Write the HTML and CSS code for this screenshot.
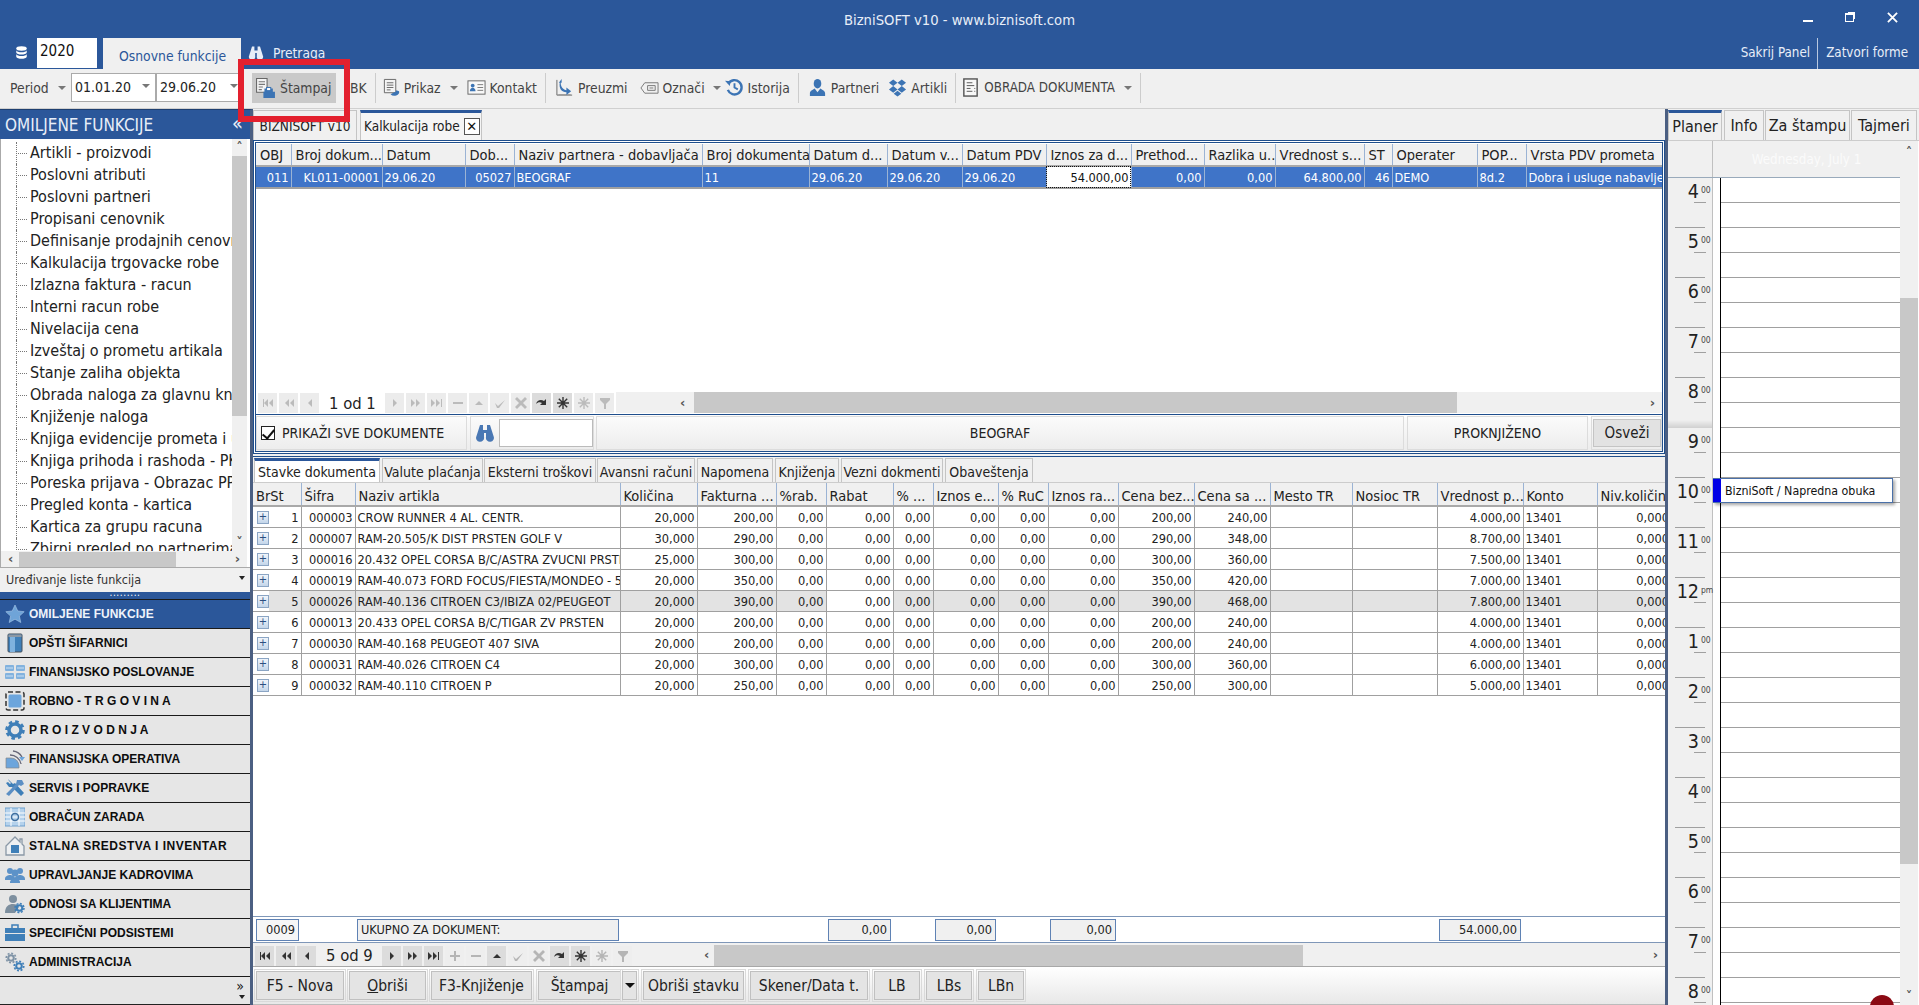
FILE: index.html
```html
<!DOCTYPE html>
<html lang="sr">
<head>
<meta charset="utf-8">
<title>BizniSOFT v10</title>
<link rel="stylesheet" href="styles.css">
</head>
<body>
<svg class="defs" width="0" height="0" aria-hidden="true">
  <defs>
    <symbol id="i-db" viewBox="0 0 20 20"><ellipse cx="10" cy="4.500" rx="7" ry="3" fill="#fff"/><path d="M3 7c1 3.600 13 3.600 14 0v3c-1 3.600-13 3.600-14 0z" fill="#fff"/><path d="M3 12c1 3.600 13 3.600 14 0v3.500c-1 3.600-13 3.600-14 0z" fill="#fff"/></symbol>
    <symbol id="i-bino" viewBox="0 0 20 20"><path d="M5 2h3v5h4V2h3l3.500 11a4 4 0 1 1-7.500 1v-4H9v4a4 4 0 1 1-7.500-1z" fill="currentColor"/></symbol>
    <symbol id="i-print" viewBox="0 0 20 20"><path d="M1.500 1.500h10v13h-10z" fill="#f4f4f4" stroke="#666"/><path d="M3.500 4.500h6M3.500 7h6M3.500 9.500h4M3.500 12h3" stroke="#777"/><path d="M9 11h8v3h2v6H8v-6h1z" fill="#3c74b4"/><rect x="11" y="10" width="4" height="3" fill="#fff" stroke="#3c74b4"/></symbol>
    <symbol id="i-view" viewBox="0 0 20 20"><path d="M2.500 1.500h12v14h-12z" fill="#f4f4f4" stroke="#666"/><path d="M5 5h7M5 7.500h7M5 10h7M5 12.500h4" stroke="#666"/><path d="M9 17a5 4 0 0 0 9-3l-3-1a2 2 0 0 1-2 2z" fill="#3c74b4"/></symbol>
    <symbol id="i-card" viewBox="0 0 20 20"><rect x="1" y="3" width="18" height="14" fill="#f8f8f8" stroke="#666"/><circle cx="6" cy="8" r="2" fill="#3c74b4"/><path d="M3 14c0-5 6-5 6 0z" fill="#3c74b4"/><path d="M11 7h6M11 10h6M11 13h6" stroke="#777"/></symbol>
    <symbol id="i-fetch" viewBox="0 0 20 20"><path d="M2 2v16h16" fill="none" stroke="#666"/><path d="M3.500 17.500h13" stroke="#999"/><path d="M7 1l-3 4h2c0 5 3 7 6 8v-3l5 4-5 4v-3c-5 0-8-4-7-10h2z" fill="#3c74b4"/></symbol>
    <symbol id="i-mark" viewBox="0 0 20 20"><path d="M5 5h14v11H5L1 10.500z" fill="#f0f0f0" stroke="#777"/><path d="M8 8h8v5H8z" fill="none" stroke="#777"/><path d="M10 10.500h4" stroke="#777"/></symbol>
    <symbol id="i-hist" viewBox="0 0 20 20"><path d="M3.500 6a7.500 7.500 0 1 1-.5 6.500" fill="none" stroke="#3c74b4" stroke-width="2.500"/><path d="M0 3l6 .5-1 5z" fill="#3c74b4"/><path d="M10 5.500V10l3.500 2" fill="none" stroke="#3c74b4" stroke-width="2"/></symbol>
    <symbol id="i-user" viewBox="0 0 20 20"><ellipse cx="10" cy="6" rx="4" ry="5" fill="#3c74b4"/><path d="M2 19v-3c0-3 4-4 5-5l3 4 3-4c1 1 5 2 5 5v3z" fill="#3c74b4"/></symbol>
    <symbol id="i-box" viewBox="0 0 20 20"><path d="M5.500 1.500L10 5 5.500 8.500 1 5zM14.500 1.500L19 5l-4.500 3.500L10 5zM5.500 8.500L10 12l-4.500 3.500L1 12zM14.500 8.500L19 12l-4.500 3.500L10 12zM6 16.500l4-3 4 3-4 3z" fill="#3c74b4"/></symbol>
    <symbol id="i-doc" viewBox="0 0 20 20"><rect x="3" y="1" width="14" height="18" fill="#f8f8f8" stroke="#555" stroke-width="1.500"/><path d="M6 5h6M6 8h8M6 11h4M6 14h6M14 11h1M14 14h1" stroke="#555"/></symbol>

    <symbol id="n-star" viewBox="0 0 20 20"><path d="M10 1l2.800 6 6.400.7-4.800 4.400 1.400 6.400L10 15.200 4.200 18.500l1.400-6.400L.8 7.700 7.200 7z" fill="#6fa4d8" stroke="#a9c9ea" stroke-width=".6"/></symbol>
    <symbol id="n-book" viewBox="0 0 20 20"><rect x="3" y="1" width="14" height="18" rx="1" fill="#3f7fb8" stroke="#44505c"/><rect x="3.500" y="1.500" width="13" height="2.500" fill="#8c98a4"/><rect x="5" y="4" width="5" height="15" fill="#7fb2de"/></symbol>
    <symbol id="n-tiles" viewBox="0 0 20 20"><g fill="#82b2de"><rect x="0" y="3" width="9" height="6" rx="1"/><rect x="11" y="3" width="9" height="6" rx="1"/><rect x="0" y="11" width="9" height="6" rx="1"/><rect x="11" y="11" width="9" height="6" rx="1"/></g><path d="M1 6h7M12 6h7M1 14h7M12 14h7" stroke="#cfe2f4"/></symbol>
    <symbol id="n-square" viewBox="0 0 20 20"><rect x="1" y="1" width="18" height="18" rx="2" fill="none" stroke="#333" stroke-width="1.500" stroke-dasharray="5 2.500"/><rect x="3.500" y="3.500" width="13" height="13" rx="1.500" fill="#6ca5dc"/></symbol>
    <symbol id="n-gear" viewBox="0 0 20 20"><circle cx="10" cy="10" r="6" fill="none" stroke="#3f7fb8" stroke-width="3.500"/><circle cx="10" cy="10" r="8.300" fill="none" stroke="#3f7fb8" stroke-width="3" stroke-dasharray="3.500 3"/></symbol>
    <symbol id="n-feed" viewBox="0 0 20 20"><path d="M1 9h5a8 8 0 0 1 8 8v2H1z" fill="#6ca5dc" stroke="#888" stroke-width=".7"/><path d="M5 6a11 11 0 0 1 11 9M8 2a12 12 0 0 1 9 6" fill="none" stroke="#667" stroke-width="1.300"/><path d="M14 8h6l-3 4z" fill="#6ca5dc"/></symbol>
    <symbol id="n-tools" viewBox="0 0 20 20"><path d="M3 1l5 5 2-1 9 10-3 3-9-9-3 0-3-4 2-1 2 2 1-1-2-2z" fill="#3f7fb8"/><path d="M12 2h5l2 4-3 2-2-1-10 11-3-2L11 6z" fill="#5c8fc4"/></symbol>
    <symbol id="n-pay" viewBox="0 0 20 20"><rect x="0" y="1" width="20" height="18" fill="#b5d2ec" stroke="#6d9fce"/><path d="M0 6h20M0 10h20M0 14h20M6 1v18M14 1v18" stroke="#fff"/><circle cx="10" cy="10" r="3.500" fill="none" stroke="#3f6f9f" stroke-width="1.500"/></symbol>
    <symbol id="n-house" viewBox="0 0 20 20"><path d="M10 1L1 10v9h18v-9l-2-2V3h-2v3z" fill="#eef0f2" stroke="#8a98a6" stroke-width="1.300"/><rect x="6" y="9" width="8" height="8" fill="#3f7fb8"/></symbol>
    <symbol id="n-people" viewBox="0 0 20 20"><g fill="#5c92c8"><circle cx="5" cy="6" r="3"/><circle cx="15" cy="6" r="3"/><circle cx="10" cy="8" r="3.500"/><path d="M0 14c0-3 3-4 5-4s5 1 5 3c0-2 3-3 5-3s5 1 5 4v1H14c1 1 1 2 1 3H5c0-1 0-2 1-3H0z"/></g></symbol>
    <symbol id="n-crm" viewBox="0 0 20 20"><g fill="#7d8f9f"><circle cx="8" cy="5" r="4"/><path d="M0 19c0-7 4-9 8-9 3 0 5 1 6 3l-4 6z"/></g><circle cx="14.500" cy="14" r="2.800" fill="none" stroke="#3f7fb8" stroke-width="2"/><circle cx="14.500" cy="14" r="4.500" fill="none" stroke="#3f7fb8" stroke-width="1.500" stroke-dasharray="2 1.500"/></symbol>
    <symbol id="n-case" viewBox="0 0 20 20"><path d="M7 5V2h6v3" fill="none" stroke="#3f7fb8" stroke-width="1.500"/><rect x="0" y="5" width="20" height="5" fill="#3f7fb8"/><rect x="0" y="11" width="20" height="7" fill="#3f7fb8"/></symbol>
    <symbol id="n-gears" viewBox="0 0 20 20"><circle cx="6" cy="6" r="2.800" fill="none" stroke="#7f93a6" stroke-width="2"/><circle cx="6" cy="6" r="4.800" fill="none" stroke="#7f93a6" stroke-width="1.600" stroke-dasharray="2 1.700"/><circle cx="14" cy="14" r="2.800" fill="none" stroke="#3f7fb8" stroke-width="2"/><circle cx="14" cy="14" r="4.800" fill="none" stroke="#3f7fb8" stroke-width="1.600" stroke-dasharray="2 1.700"/></symbol>

    <symbol id="g-first" viewBox="0 0 14 14"><path d="M2 3v8h1V3zM7 3v8L3 7zM12 3v8L8 7z"/></symbol>
    <symbol id="g-prev2" viewBox="0 0 14 14"><path d="M7 3v8L3 7zM12 3v8L8 7z"/></symbol>
    <symbol id="g-prev" viewBox="0 0 14 14"><path d="M9 3v8L5 7z"/></symbol>
    <symbol id="g-next" viewBox="0 0 14 14"><path d="M5 3v8l4-4z"/></symbol>
    <symbol id="g-next2" viewBox="0 0 14 14"><path d="M2 3v8l4-4zM7 3v8l4-4z"/></symbol>
    <symbol id="g-last" viewBox="0 0 14 14"><path d="M1 3v8l4-4zM6 3v8l4-4zM11 3v8h1V3z"/></symbol>
    <symbol id="g-plus" viewBox="0 0 14 14"><path d="M6 2h2v4h4v2H8v4H6V8H2V6h4z"/></symbol>
    <symbol id="g-minus" viewBox="0 0 14 14"><path d="M2 6h10v2H2z"/></symbol>
    <symbol id="g-up" viewBox="0 0 14 14"><path d="M3 9l4-4 4 4z"/></symbol>
    <symbol id="g-check" viewBox="0 0 14 14"><path d="M2 7l3 3 7-6-6 8h-2z"/></symbol>
    <symbol id="g-x" viewBox="0 0 14 14"><path d="M1 3l2-2 4 4 4-4 2 2-4 4 4 4-2 2-4-4-4 4-2-2 4-4z"/></symbol>
    <symbol id="g-redo" viewBox="0 0 14 14"><path d="M1 8c1-4 5-5 8-3l2-2v6H5l2-2c-2-1-4-1-6 1z"/></symbol>
    <symbol id="g-ast" viewBox="0 0 14 14"><path d="M7 1v12M1 7h12M2.800 2.800l8.400 8.400M11.200 2.800l-8.400 8.400" stroke="currentColor" stroke-width="1.400"/></symbol>
    <symbol id="g-filter" viewBox="0 0 14 14"><path d="M2 2h10v2L8 8v5H6V8L2 4z"/></symbol>
  </defs>
</svg>

<div class="app">
  <header class="titlebar">
    <div class="title-row">
      <span></span>
      <h1 class="app-title">BizniSOFT v10 - www.biznisoft.com</h1>
      <div class="win-controls">
        <span class="win-min"></span>
        <span class="win-max"></span>
        <svg class="win-close" viewBox="0 0 12 12"><path d="M1 1l10 10M11 1L1 11" stroke="#fff" stroke-width="2"/></svg>
      </div>
    </div>
    <div class="ribbon-row">
      <svg class="db-icon"><use href="#i-db"/></svg>
      <div class="year">2020</div>
      <div class="ribbon-tab">Osnovne funkcije</div>
      <div class="ribbon-link"><svg class="bino"><use href="#i-bino"/></svg>Pretraga</div>
      <div class="ribbon-right"><span>Sakrij Panel</span><span class="ribbon-sep">Zatvori forme</span></div>
    </div>
  </header>

  <div class="toolbar">
    <span class="period">Period</span><i class="caret period-caret"></i>
    <div class="date">01.01.20<i class="caret"></i></div>
    <div class="date date2">29.06.20<i class="caret"></i></div>
    <div class="tool tool-active"><svg class="ti"><use href="#i-print"/></svg>Štampaj</div>
    <div class="tool tool-bk">BK</div>
    <div class="vsep"></div>
    <div class="tool tool-prikaz"><svg class="ti"><use href="#i-view"/></svg>Prikaz<i class="caret"></i></div>
    <div class="tool tool-kontakt"><svg class="ti"><use href="#i-card"/></svg>Kontakt</div>
    <div class="vsep"></div>
    <div class="tool tool-preuzmi"><svg class="ti"><use href="#i-fetch"/></svg>Preuzmi</div>
    <div class="tool tool-oznaci"><svg class="ti"><use href="#i-mark"/></svg>Označi<i class="caret"></i></div>
    <div class="tool tool-istorija"><svg class="ti"><use href="#i-hist"/></svg>Istorija</div>
    <div class="vsep"></div>
    <div class="tool tool-partneri"><svg class="ti"><use href="#i-user"/></svg>Partneri</div>
    <div class="tool tool-artikli"><svg class="ti"><use href="#i-box"/></svg>Artikli</div>
    <div class="vsep"></div>
    <div class="tool tool-obrada"><svg class="ti"><use href="#i-doc"/></svg>OBRADA DOKUMENTA<i class="caret"></i></div>
    <div class="vsep"></div>
  </div>

  <div class="main">
    <aside class="sidebar">
      <div class="side-head"><span>OMILJENE FUNKCIJE</span><span class="side-collapse">«</span></div>
      <div class="tree-box">
        <div class="tree-row">
          <ul class="tree">
            <li>Artikli - proizvodi</li>
            <li>Poslovni atributi</li>
            <li>Poslovni partneri</li>
            <li>Propisani cenovnik</li>
            <li>Definisanje prodajnih cenovnika</li>
            <li>Kalkulacija trgovacke robe</li>
            <li>Izlazna faktura - racun</li>
            <li>Interni racun robe</li>
            <li>Nivelacija cena</li>
            <li>Izveštaj o prometu artikala</li>
            <li>Stanje zaliha objekta</li>
            <li>Obrada naloga za glavnu knjigu</li>
            <li>Knjiženje naloga</li>
            <li>Knjiga evidencije prometa i usluga</li>
            <li>Knjiga prihoda i rashoda - PK1</li>
            <li>Poreska prijava - Obrazac PPDV</li>
            <li>Pregled konta - kartica</li>
            <li>Kartica za grupu racuna</li>
            <li>Zbirni pregled po partnerima</li>
          </ul>
          <div class="tree-vscroll"><span class="chev">˄</span><div class="tree-vthumb"></div><span class="chev chev-end">˅</span></div>
        </div>
        <div class="tree-hscroll"><span class="chev">‹</span><div class="tree-hthumb"></div><span class="chev chev-right">›</span></div>
      </div>
      <div class="edit-list">Uređivanje liste funkcija<i class="caret-dark"></i></div>
      <div class="grip">.........</div>
      <nav class="side-nav">
        <a class="nav-item nav-active"><svg class="ni"><use href="#n-star"/></svg>OMILJENE FUNKCIJE</a>
        <a class="nav-item"><svg class="ni"><use href="#n-book"/></svg>OPŠTI ŠIFARNICI</a>
        <a class="nav-item"><svg class="ni"><use href="#n-tiles"/></svg>FINANSIJSKO POSLOVANJE</a>
        <a class="nav-item"><svg class="ni"><use href="#n-square"/></svg>ROBNO - T R G O V I N A</a>
        <a class="nav-item"><svg class="ni"><use href="#n-gear"/></svg>P R O I Z V O D N J A</a>
        <a class="nav-item"><svg class="ni"><use href="#n-feed"/></svg>FINANSIJSKA OPERATIVA</a>
        <a class="nav-item"><svg class="ni"><use href="#n-tools"/></svg>SERVIS I POPRAVKE</a>
        <a class="nav-item"><svg class="ni"><use href="#n-pay"/></svg>OBRAČUN ZARADA</a>
        <a class="nav-item nav-wide"><svg class="ni"><use href="#n-house"/></svg>STALNA SREDSTVA I INVENTAR</a>
        <a class="nav-item"><svg class="ni"><use href="#n-people"/></svg>UPRAVLJANJE KADROVIMA</a>
        <a class="nav-item"><svg class="ni"><use href="#n-crm"/></svg>ODNOSI SA KLIJENTIMA</a>
        <a class="nav-item"><svg class="ni"><use href="#n-case"/></svg>SPECIFIČNI PODSISTEMI</a>
        <a class="nav-item"><svg class="ni"><use href="#n-gears"/></svg>ADMINISTRACIJA</a>
      </nav>
      <div class="side-foot"><span>»<i class="caret-dark"></i></span></div>
    </aside>

    <section class="work">
      <div class="tabs doc-tabs">
        <div class="tab tab-plain">BIZNISOFT v10</div>
        <div class="tab tab-on">Kalkulacija robe<span class="tab-x">✕</span></div>
      </div>

      <div class="doc-panel">
        <div class="grid-clip docs-body">
          <table class="grid docs">
            <colgroup><col><col><col><col><col><col><col><col><col><col><col><col><col><col><col><col><col></colgroup>
            <thead><tr><th>OBJ</th><th>Broj dokum...</th><th>Datum</th><th>Dob...</th><th>Naziv partnera - dobavljača</th><th>Broj dokumenta</th><th>Datum d...</th><th>Datum v...</th><th>Datum PDV</th><th>Iznos za d...</th><th>Prethod...</th><th>Razlika u...</th><th>Vrednost s...</th><th>ST</th><th>Operater</th><th>POP...</th><th>Vrsta PDV prometa</th></tr></thead>
            <tbody><tr class="sel"><td class="r">011</td><td class="r">KL011-00001</td><td>29.06.20</td><td class="r">05027</td><td>BEOGRAF</td><td>11</td><td>29.06.20</td><td>29.06.20</td><td>29.06.20</td><td class="r focus">54.000,00</td><td class="r">0,00</td><td class="r">0,00</td><td class="r">64.800,00</td><td class="r">46</td><td>DEMO</td><td>8d.2</td><td>Dobra i usluge nabavljene</td></tr></tbody>
          </table>
        </div>
        <div class="gridnav">
          <div class="pager pager-dim">
            <b><svg><use href="#g-first"/></svg></b><b><svg><use href="#g-prev2"/></svg></b><b><svg><use href="#g-prev"/></svg></b>
            <span class="pos">1 od 1</span>
            <b><svg><use href="#g-next"/></svg></b><b><svg><use href="#g-next2"/></svg></b><b><svg><use href="#g-last"/></svg></b><b><svg><use href="#g-minus"/></svg></b><b><svg><use href="#g-up"/></svg></b><b><svg><use href="#g-check"/></svg></b><b><svg><use href="#g-x"/></svg></b>
            <b class="on"><svg><use href="#g-redo"/></svg></b><b class="on"><svg><use href="#g-ast"/></svg></b><b><svg><use href="#g-ast"/></svg></b><b><svg><use href="#g-filter"/></svg></b>
          </div>
          <div class="hscroll hscroll-top"><span class="chev">‹</span><div class="hthumb"></div><span class="chev chev-right">›</span></div>
        </div>
        <div class="filter">
          <label class="f-cell f-check"><span class="checkbox"></span>PRIKAŽI SVE DOKUMENTE</label>
          <div class="f-cell f-search"><svg class="f-bino"><use href="#i-bino"/></svg><span class="f-input"></span></div>
          <div class="f-cell f-partner">BEOGRAF</div>
          <div class="f-cell f-status">PROKNJIŽENO</div>
          <div class="f-refresh"><span>Osveži</span></div>
        </div>
      </div>

      <div class="split-line"></div>

      <div class="tabs item-tabs">
        <div class="tab tab-on">Stavke dokumenta</div>
        <div class="tab">Valute plaćanja</div>
        <div class="tab">Eksterni troškovi</div>
        <div class="tab">Avansni računi</div>
        <div class="tab">Napomena</div>
        <div class="tab">Knjiženja</div>
        <div class="tab">Vezni dokmenti</div>
        <div class="tab">Obaveštenja</div>
      </div>

      <div class="grid-clip items-body">
        <table class="grid items">
          <colgroup><col><col><col><col><col><col><col><col><col><col><col><col><col><col><col><col><col><col></colgroup>
          <thead><tr><th>BrSt</th><th>Šifra</th><th>Naziv artikla</th><th>Količina</th><th>Fakturna ...</th><th>%rab.</th><th>Rabat</th><th>% ...</th><th>Iznos e...</th><th>% RuC</th><th>Iznos ra...</th><th>Cena bez...</th><th>Cena sa ...</th><th>Mesto TR</th><th>Nosioc TR</th><th>Vrednost p...</th><th>Konto</th><th>Niv.količina</th></tr></thead>
          <tbody>
            <tr><td class="no"><span class="plus">+</span>1</td><td class="r">000003</td><td>CROW RUNNER 4 AL. CENTR.</td><td class="r">20,000</td><td class="r">200,00</td><td class="r">0,00</td><td class="r">0,00</td><td class="r">0,00</td><td class="r">0,00</td><td class="r">0,00</td><td class="r">0,00</td><td class="r">200,00</td><td class="r">240,00</td><td></td><td></td><td class="r">4.000,00</td><td>13401</td><td class="r">0,000</td></tr>
            <tr><td class="no"><span class="plus">+</span>2</td><td class="r">000007</td><td>RAM-20.505/K DIST PRSTEN GOLF V</td><td class="r">30,000</td><td class="r">290,00</td><td class="r">0,00</td><td class="r">0,00</td><td class="r">0,00</td><td class="r">0,00</td><td class="r">0,00</td><td class="r">0,00</td><td class="r">290,00</td><td class="r">348,00</td><td></td><td></td><td class="r">8.700,00</td><td>13401</td><td class="r">0,000</td></tr>
            <tr><td class="no"><span class="plus">+</span>3</td><td class="r">000016</td><td>20.432 OPEL CORSA B/C/ASTRA ZVUCNI PRSTEN</td><td class="r">25,000</td><td class="r">300,00</td><td class="r">0,00</td><td class="r">0,00</td><td class="r">0,00</td><td class="r">0,00</td><td class="r">0,00</td><td class="r">0,00</td><td class="r">300,00</td><td class="r">360,00</td><td></td><td></td><td class="r">7.500,00</td><td>13401</td><td class="r">0,000</td></tr>
            <tr><td class="no"><span class="plus">+</span>4</td><td class="r">000019</td><td>RAM-40.073 FORD FOCUS/FIESTA/MONDEO - 5</td><td class="r">20,000</td><td class="r">350,00</td><td class="r">0,00</td><td class="r">0,00</td><td class="r">0,00</td><td class="r">0,00</td><td class="r">0,00</td><td class="r">0,00</td><td class="r">350,00</td><td class="r">420,00</td><td></td><td></td><td class="r">7.000,00</td><td>13401</td><td class="r">0,000</td></tr>
            <tr class="cur"><td class="no"><span class="plus">+</span>5</td><td class="r">000026</td><td>RAM-40.136 CITROEN C3/IBIZA 02/PEUGEOT</td><td class="r">20,000</td><td class="r">390,00</td><td class="r">0,00</td><td class="r edit">0,00</td><td class="r">0,00</td><td class="r">0,00</td><td class="r">0,00</td><td class="r">0,00</td><td class="r">390,00</td><td class="r">468,00</td><td></td><td></td><td class="r">7.800,00</td><td>13401</td><td class="r">0,000</td></tr>
            <tr><td class="no"><span class="plus">+</span>6</td><td class="r">000013</td><td>20.433 OPEL CORSA B/C/TIGAR ZV PRSTEN</td><td class="r">20,000</td><td class="r">200,00</td><td class="r">0,00</td><td class="r">0,00</td><td class="r">0,00</td><td class="r">0,00</td><td class="r">0,00</td><td class="r">0,00</td><td class="r">200,00</td><td class="r">240,00</td><td></td><td></td><td class="r">4.000,00</td><td>13401</td><td class="r">0,000</td></tr>
            <tr><td class="no"><span class="plus">+</span>7</td><td class="r">000030</td><td>RAM-40.168 PEUGEOT 407 SIVA</td><td class="r">20,000</td><td class="r">200,00</td><td class="r">0,00</td><td class="r">0,00</td><td class="r">0,00</td><td class="r">0,00</td><td class="r">0,00</td><td class="r">0,00</td><td class="r">200,00</td><td class="r">240,00</td><td></td><td></td><td class="r">4.000,00</td><td>13401</td><td class="r">0,000</td></tr>
            <tr><td class="no"><span class="plus">+</span>8</td><td class="r">000031</td><td>RAM-40.026 CITROEN C4</td><td class="r">20,000</td><td class="r">300,00</td><td class="r">0,00</td><td class="r">0,00</td><td class="r">0,00</td><td class="r">0,00</td><td class="r">0,00</td><td class="r">0,00</td><td class="r">300,00</td><td class="r">360,00</td><td></td><td></td><td class="r">6.000,00</td><td>13401</td><td class="r">0,000</td></tr>
            <tr><td class="no"><span class="plus">+</span>9</td><td class="r">000032</td><td>RAM-40.110 CITROEN P</td><td class="r">20,000</td><td class="r">250,00</td><td class="r">0,00</td><td class="r">0,00</td><td class="r">0,00</td><td class="r">0,00</td><td class="r">0,00</td><td class="r">0,00</td><td class="r">250,00</td><td class="r">300,00</td><td></td><td></td><td class="r">5.000,00</td><td>13401</td><td class="r">0,000</td></tr>
          </tbody>
        </table>
      </div>

      <div class="totals">
        <div class="tot tot-count">0009</div>
        <div class="tot tot-label">UKUPNO ZA DOKUMENT:</div>
        <div class="tot tot-a">0,00</div>
        <div class="tot tot-b">0,00</div>
        <div class="tot tot-c">0,00</div>
        <div class="tot tot-d">54.000,00</div>
      </div>

      <div class="gridnav gridnav-low">
        <div class="pager">
          <b><svg><use href="#g-first"/></svg></b><b><svg><use href="#g-prev2"/></svg></b><b><svg><use href="#g-prev"/></svg></b>
          <span class="pos">5 od 9</span>
          <b><svg><use href="#g-next"/></svg></b><b><svg><use href="#g-next2"/></svg></b><b><svg><use href="#g-last"/></svg></b><b class="off"><svg><use href="#g-plus"/></svg></b><b class="off"><svg><use href="#g-minus"/></svg></b><b><svg><use href="#g-up"/></svg></b><b class="off"><svg><use href="#g-check"/></svg></b><b class="off"><svg><use href="#g-x"/></svg></b>
          <b><svg><use href="#g-redo"/></svg></b><b><svg><use href="#g-ast"/></svg></b><b class="off"><svg><use href="#g-ast"/></svg></b><b class="off"><svg><use href="#g-filter"/></svg></b>
        </div>
        <div class="hscroll hscroll-low"><span class="chev">‹</span><div class="hthumb"></div><span class="chev chev-right">›</span></div>
      </div>

      <div class="actions">
        <button class="btn btn-nova">F5 - Nova</button>
        <button class="btn btn-obrisi"><u>O</u>briši</button>
        <button class="btn btn-knj">F3-Knjiženje</button>
        <button class="btn btn-stampaj">Š<u>t</u>ampaj</button>
        <button class="btn btn-drop"><i class="caret-black"></i></button>
        <button class="btn btn-stavku">Obriši <u>s</u>tavku</button>
        <button class="btn btn-skener">Skener/Data t.</button>
        <button class="btn btn-lb">LB</button>
        <button class="btn btn-lb">LBs</button>
        <button class="btn btn-lb">LBn</button>
      </div>
    </section>

    <aside class="planner">
      <div class="tabs plan-tabs">
        <div class="tab tab-on">Planer</div>
        <div class="tab">Info</div>
        <div class="tab">Za štampu</div>
        <div class="tab">Tajmeri</div>
      </div>
      <div class="sched">
        <div class="sched-main">
          <div class="sched-head"><div class="sched-corner"></div><div class="sched-day">Wednesday, July 1</div></div>
          <div class="sched-body">
            <div class="hour"><div class="h-time"><span class="h-num">4</span><span class="h-min">00</span></div><div class="h-day"><i></i><i></i></div></div>
            <div class="hour"><div class="h-time"><span class="h-num">5</span><span class="h-min">00</span></div><div class="h-day"><i></i><i></i></div></div>
            <div class="hour"><div class="h-time"><span class="h-num">6</span><span class="h-min">00</span></div><div class="h-day"><i></i><i></i></div></div>
            <div class="hour"><div class="h-time"><span class="h-num">7</span><span class="h-min">00</span></div><div class="h-day"><i></i><i></i></div></div>
            <div class="hour"><div class="h-time h-shadow"><span class="h-num">8</span><span class="h-min">00</span></div><div class="h-day"><i></i><i></i></div></div>
            <div class="hour"><div class="h-time"><span class="h-num">9</span><span class="h-min">00</span></div><div class="h-day"><i></i><i></i></div></div>
            <div class="hour"><div class="h-time"><span class="h-num">10</span><span class="h-min">00</span></div><div class="h-day"><i></i><i></i></div></div>
            <div class="hour"><div class="h-time"><span class="h-num">11</span><span class="h-min">00</span></div><div class="h-day"><i></i><i></i></div></div>
            <div class="hour"><div class="h-time"><span class="h-num">12</span><span class="h-min">pm</span></div><div class="h-day"><i></i><i></i></div></div>
            <div class="hour"><div class="h-time"><span class="h-num">1</span><span class="h-min">00</span></div><div class="h-day"><i></i><i></i></div></div>
            <div class="hour"><div class="h-time"><span class="h-num">2</span><span class="h-min">00</span></div><div class="h-day"><i></i><i></i></div></div>
            <div class="hour"><div class="h-time"><span class="h-num">3</span><span class="h-min">00</span></div><div class="h-day"><i></i><i></i></div></div>
            <div class="hour"><div class="h-time"><span class="h-num">4</span><span class="h-min">00</span></div><div class="h-day"><i></i><i></i></div></div>
            <div class="hour"><div class="h-time"><span class="h-num">5</span><span class="h-min">00</span></div><div class="h-day"><i></i><i></i></div></div>
            <div class="hour"><div class="h-time"><span class="h-num">6</span><span class="h-min">00</span></div><div class="h-day"><i></i><i></i></div></div>
            <div class="hour"><div class="h-time"><span class="h-num">7</span><span class="h-min">00</span></div><div class="h-day"><i></i><i></i></div></div>
            <div class="hour"><div class="h-time"><span class="h-num">8</span><span class="h-min">00</span></div><div class="h-day"><i></i><i></i></div></div>
            <div class="event"><span class="event-bar"></span><span class="event-text">BizniSoft / Napredna obuka</span></div>
            <div class="badge"></div>
          </div>
        </div>
        <div class="sched-scroll"><span class="chev">˄</span><div class="sched-thumb"></div><span class="chev chev-end">˅</span></div>
      </div>
    </aside>
  </div>

  <div class="callout"></div>
</div>
</body>
</html>
```

FILE: styles.css
```css
* { box-sizing: border-box; }
html, body { margin: 0; padding: 0; }
body {
  width: 1919px;
  height: 1005px;
  overflow: hidden;
  background: #f0f0f0;
  color: #111;
  font-family: "DejaVu Sans Condensed", "Liberation Sans", sans-serif;
  font-size: 14px;
}
.defs { position: absolute; }
.app { position: relative; display: flex; flex-direction: column; width: 1919px; height: 1005px; }

/* title bar */
.titlebar { height: 69px; background: #2b579a; color: #e8eef8; flex: none; }
.title-row { height: 38px; display: grid; grid-template-columns: 1fr auto 1fr; padding-top: 10px; }
.app-title { margin: 0; font-size: 14.700px; font-weight: 400; line-height: 20px; }
.win-controls { display: flex; justify-content: flex-end; align-items: flex-start; padding-right: 21px; }
.win-min { width: 10px; height: 2px; background: #fff; margin: 10px 32px 0 0; }
.win-max { width: 9px; height: 9px; border: 1px solid #fff; border-top-width: 2px; margin: 3px 33px 0 0; box-shadow: 2px -2px 0 -1px #fff; }
.win-close { width: 11px; height: 11px; margin-top: 2px; }
.ribbon-row { height: 31px; display: flex; align-items: flex-start; position: relative; }
.db-icon { width: 15px; height: 15px; margin: 7px 0 0 14px; }
.year { width: 60px; height: 30px; margin-left: 8px; background: #fff; color: #111; font-size: 15px; line-height: 26px; padding-left: 3px; }
.ribbon-tab { width: 138px; height: 31px; margin-left: 6px; background: #f0f0f0; color: #2b579a; font-size: 13.800px; padding: 10px 0 0 16px; }
.ribbon-link { display: flex; align-items: center; margin: 7px 0 0 7px; font-size: 13.700px; }
.bino { width: 16px; height: 16px; margin-right: 9px; color: #e8eef8; }
.ribbon-right { margin-left: auto; display: flex; height: 31px; font-size: 13.300px; line-height: 30px; padding-right: 11px; }
.ribbon-sep { margin-left: 7px; padding-left: 8px; border-left: 1px solid #b8c8e0; }

/* toolbar */
.toolbar { height: 40px; flex: none; display: flex; align-items: center; background: #f0f0f0; border-bottom: 1px solid #d0d0d0; font-size: 13.800px; color: #444; padding: 0 0 2px 10px; }
.period { width: 46px; }
.caret { display: inline-block; width: 0; height: 0; border-left: 4px solid transparent; border-right: 4px solid transparent; border-top: 4px solid #777; }
.period-caret { margin: 0 5px 0 2px; }
.date { position: relative; width: 85px; height: 29px; border: 1px solid #aaa; background: #fff; color: #222; padding: 5px 0 0 3px; font-size: 14px; flex: none; }
.date .caret { position: absolute; right: 5px; top: 10px; }
.date2 { width: 88px; margin-left: 0; }
.tool { display: flex; align-items: center; height: 30px; flex: none; }
.ti { width: 19px; height: 19px; margin-right: 4px; flex: none; }
.tool-active { margin-left: 8px; width: 84px; padding-left: 3px; background: #c9c9c9; }
.tool-active .ti { width: 21px; height: 21px; }
.tool-bk { margin-left: 14px; }
.tool-prikaz { margin-left: 6px; }
.tool-prikaz .ti { margin-right: 3px; }
.tool-prikaz .caret { margin-left: 9px; }
.tool-kontakt { margin-left: 9px; }
.tool-preuzmi { margin-left: 9px; }
.tool-oznaci { margin-left: 12px; }
.tool-oznaci .caret { margin-left: 8px; }
.tool-istorija { margin-left: 4px; }
.tool-partneri { margin-left: 9px; }
.tool-artikli { margin-left: 9px; }
.tool-obrada { margin-left: 5px; font-size: 13.300px; }
.tool-obrada .caret { margin-left: 9px; }
.vsep { width: 1px; height: 30px; background: #ccc; margin-left: 8px; flex: none; }

/* main */
.main { flex: 1; min-height: 0; display: flex; }

/* sidebar */
.sidebar { width: 253px; flex: none; display: flex; flex-direction: column; border-right: 3px solid #4b5f82; border-top: 1px solid #1e3f70; }
.side-head { height: 29px; flex: none; background: #2b579a; color: #e8eef8; font-size: 17px; line-height: 30px; padding: 0 7px 0 5px; display: flex; justify-content: space-between; }
.side-collapse { font-size: 20px; line-height: 26px; }
.tree-box { height: 429px; flex: none; background: #fff; border-left: 1px solid #aaa; border-bottom: 1px solid #aaa; display: flex; flex-direction: column; }
.tree-row { flex: 1; min-height: 0; display: flex; }
.tree { flex: 1; min-width: 0; margin: 0; padding: 3px 0 0; list-style: none; overflow: hidden; font-size: 16px; color: #222; }
.tree li { position: relative; height: 22px; line-height: 22px; padding-left: 29px; white-space: nowrap; }
.tree li::before { content: ""; position: absolute; left: 15px; top: 11px; width: 11px; border-top: 1px dotted #777; }
.tree li::after { content: ""; position: absolute; left: 15px; top: 0; height: 22px; border-left: 1px dotted #777; }
.tree-vscroll { width: 15px; margin-right: 3px; flex: none; background: #f0f0f0; display: flex; flex-direction: column; align-items: center; }
.tree-vthumb { width: 15px; height: 260px; background: #c8c8c8; }
.chev { font-size: 13px; line-height: 15px; color: #555; height: 17px; font-family: "DejaVu Sans", sans-serif; font-weight: 700; }
.chev-end { margin-top: auto; }
.tree-hscroll { height: 16px; flex: none; background: #f0f0f0; display: flex; align-items: center; margin-right: 3px; padding-left: 7px; }
.tree-hthumb { width: 157px; height: 15px; margin-left: 6px; background: #c8c8c8; }
.chev-right { margin-left: auto; margin-right: 7px; }
.edit-list { position: relative; height: 24px; flex: none; font-size: 12.500px; line-height: 24px; padding-left: 6px; color: #333; background: #f0f0f0; }
.caret-dark { position: absolute; right: 5px; top: 8px; width: 0; height: 0; border-left: 3px solid transparent; border-right: 3px solid transparent; border-top: 4px solid #222; }
.grip { height: 7px; flex: none; background: #2b579a; color: #fff; text-align: center; font-size: 10px; line-height: 0; padding-top: 1px; letter-spacing: .6px; }
.side-nav { display: flex; flex-direction: column; flex: none; }
.nav-item { height: 29px; display: flex; align-items: center; background: #e6e6e6; color: #0d0d0d; font-family: "Liberation Sans", sans-serif; font-weight: 700; font-size: 12px; border-top: 1px solid #1a1a1a; padding-left: 5px; white-space: nowrap; }
.nav-wide { letter-spacing: .5px; }
.nav-active { background: #2b579a; color: #eef3fa; }
.ni { width: 20px; height: 20px; margin-right: 4px; flex: none; }
.side-foot { flex: 1; background: #e6e6e6; border-top: 1px solid #1a1a1a; border-bottom: 1px solid #222; position: relative; text-align: right; padding-right: 6px; font-size: 14px; line-height: 18px; }
.side-foot .caret-dark { top: 18px; }

/* tabs */
.tabs { display: flex; align-items: flex-end; flex: none; }
.tab { position: relative; background: #f0f0f0; border: 1px solid #c4c4c4; border-bottom: 0; font-size: 14px; color: #222; text-align: center; white-space: nowrap; padding: 0; }
.tab-on { background: #fff; border-top: 3px solid #2b579a; border-color: #c4c4c4; border-top-color: #2b579a; }

/* work */
.work { width: 1414px; flex: none; display: flex; flex-direction: column; min-width: 0; border-right: 2px solid #4b5f82; }
.doc-tabs { height: 31px; padding-left: 0; }
.doc-tabs .tab { height: 30px; line-height: 30px; }
.tab-plain { width: 104px; font-size: 13.500px; }
.doc-tabs .tab-on { width: 122px; margin-left: 3px; padding-left: 3px; text-align: left; background: #f5f5f5; line-height: 27px; font-size: 13.500px; }
.tab-x { display: inline-block; width: 16px; height: 17px; margin-left: 4px; border: 1px solid #555; font-size: 13px; line-height: 15px; text-align: center; background: #fff; color: #111; font-family: "DejaVu Sans", sans-serif; vertical-align: 0; }

.doc-panel { height: 314px; flex: none; display: flex; flex-direction: column; border: 3px double #1f4e8c; padding-top: 1px; background: #fff; }
.grid-clip { overflow: hidden; background: #fff; min-height: 0; }
.docs-body { flex: 1; }

.grid { table-layout: fixed; border-collapse: collapse; }
.grid th { height: 22px; padding: 1px 0 0 4px; background: #f0f0f0; border-left: 1px solid #9bb3d4; border-bottom: 2px solid #a9a9a9; font-weight: 400; font-size: 14.500px; text-align: left; white-space: nowrap; overflow: hidden; color: #222; }
.grid th:first-child { border-left: 0; }
.grid td { padding: 1px 2px 0; font-size: 12.700px; white-space: nowrap; overflow: hidden; }
.r { text-align: right; }

.docs { width: 1407px; }
.docs col:nth-child(1) { width: 35px; }
.docs col:nth-child(2) { width: 91px; }
.docs col:nth-child(3) { width: 83px; }
.docs col:nth-child(4) { width: 49px; }
.docs col:nth-child(5) { width: 188px; }
.docs col:nth-child(6) { width: 107px; }
.docs col:nth-child(7) { width: 78px; }
.docs col:nth-child(8) { width: 75px; }
.docs col:nth-child(9) { width: 84px; }
.docs col:nth-child(10) { width: 85px; }
.docs col:nth-child(11) { width: 73px; }
.docs col:nth-child(12) { width: 71px; }
.docs col:nth-child(13) { width: 89px; }
.docs col:nth-child(14) { width: 28px; }
.docs col:nth-child(15) { width: 85px; }
.docs col:nth-child(16) { width: 49px; }
.docs col:nth-child(17) { width: 137px; }
.docs td { height: 22px; border-left: 1px solid #9bb3d4; border-bottom: 2px solid #a0a0a0; }
.docs td:first-child { border-left: 0; }
.sel td { background: #3f74c8; color: #fff; }
.sel td.focus { background: #fff; color: #111; outline: 1px dotted #111; outline-offset: -1px; }

.gridnav { display: flex; flex: none; }
.doc-panel .gridnav { border-bottom: 1px solid #1f4e8c; height: 23px; }
.pager { display: flex; align-items: center; padding-left: 2px; flex: none; }
.pager b { width: 19px; height: 20px; margin-right: 2px; display: flex; align-items: center; justify-content: center; background: #dcdcdc; color: #333; fill: #333; flex: none; }
.pager svg { width: 14px; height: 14px; fill: currentColor; }
.pager .pos { width: 61px; margin: 0 0 0 3px; padding-left: 5px; font-size: 16.500px; color: #222; }
.pager .off { background: #eee; color: #b5b5b5; }
.pager-dim b { background: #ececec; color: #bbb; }
.pager-dim .on { background: #dcdcdc; color: #333; }
.hscroll { flex: 1; display: flex; align-items: center; background: #f0f0f0; height: 21px; }
.hscroll-top { padding-left: 64px; }
.hscroll-top .chev { margin-top: 2px; }
.hthumb { height: 21px; background: #c8c8c8; margin-left: 5px; }
.hscroll-top .hthumb { width: 763px; margin-left: 9px; }

.filter { height: 36px; flex: none; display: flex; background: linear-gradient(#fcfcfc, #ececec); padding: 1px 0; font-size: 14px; color: #222; }
.f-cell { display: flex; align-items: center; border: 1px solid #dcdcdc; height: 34px; flex: none; }
.f-check { width: 211px; padding-left: 4px; margin-right: 3px; }
.checkbox { position: relative; width: 14px; height: 14px; border: 1px solid #222; background: #fff; margin-right: 7px; }
.checkbox::after { content: ""; position: absolute; left: 3px; top: 0; width: 5px; height: 10px; border: solid #111; border-width: 0 2px 2px 0; transform: rotate(40deg); }
.f-search { width: 124px; padding-left: 4px; margin-right: 2px; }
.f-bino { width: 20px; height: 20px; color: #4a78b4; margin-right: 4px; }
.f-input { width: 94px; height: 28px; background: #fff; border: 1px solid #bbb; }
.f-partner { width: 808px; justify-content: center; margin-right: 3px; }
.f-status { width: 181px; justify-content: center; margin-right: 3px; }
.f-refresh { flex: 1; padding: 2px 0 2px 1px; border: 1px solid #dcdcdc; }
.f-refresh span { display: block; height: 28px; background: #e2e2e2; border: 1px solid #c4c4c4; text-align: center; line-height: 26px; font-size: 15px; }

.split-line { height: 3px; flex: none; border-bottom: 1px solid #1f4e8c; margin-bottom: 2px; }

.item-tabs { height: 24px; padding-left: 1px; border-bottom: 1px solid #ccc; }
.item-tabs .tab { height: 24px; line-height: 26px; margin-right: 2px; font-size: 14px; }
.item-tabs .tab:nth-child(1) { width: 126px; line-height: 23px; }
.item-tabs .tab:nth-child(2) { width: 101px; margin-right: 1px; }
.item-tabs .tab:nth-child(3) { width: 112px; margin-right: 1px; }
.item-tabs .tab:nth-child(4) { width: 98px; }
.item-tabs .tab:nth-child(5) { width: 76px; }
.item-tabs .tab:nth-child(6) { width: 64px; }
.item-tabs .tab:nth-child(7) { width: 102px; }
.item-tabs .tab:nth-child(8) { width: 88px; }

.items-body { flex: 1; }
.items { width: 1418px; }
.items col:nth-child(1) { width: 48px; }
.items col:nth-child(2) { width: 54px; }
.items col:nth-child(3) { width: 265px; }
.items col:nth-child(4) { width: 77px; }
.items col:nth-child(5) { width: 79px; }
.items col:nth-child(6) { width: 50px; }
.items col:nth-child(7) { width: 67px; }
.items col:nth-child(8) { width: 40px; }
.items col:nth-child(9) { width: 65px; }
.items col:nth-child(10) { width: 50px; }
.items col:nth-child(11) { width: 70px; }
.items col:nth-child(12) { width: 76px; }
.items col:nth-child(13) { width: 76px; }
.items col:nth-child(14) { width: 82px; }
.items col:nth-child(15) { width: 85px; }
.items col:nth-child(16) { width: 86px; }
.items col:nth-child(17) { width: 74px; }
.items col:nth-child(18) { width: 74px; }
.items th { height: 23px; padding: 3px 0 0 3px; }
.items td { height: 21px; border-left: 1px solid #a0a0a0; border-bottom: 1px solid #a0a0a0; color: #222; }
.items td:first-child { border-left: 0; }
.cur td { background: #e3e3e3; }
.cur td.no { background: linear-gradient(90deg, #fff 16px, #e3e3e3 16px); }
.cur td.edit { background: #fff; }
.no { text-align: right; position: relative; }
.plus { position: absolute; left: 4px; top: 4px; width: 12px; height: 13px; background: linear-gradient(#f0f5fb, #c4d6ea); border: 1px solid #8ba5c4; color: #2b4f80; font-size: 11px; line-height: 10px; text-align: center; }

.totals { height: 27px; flex: none; display: flex; align-items: center; background: #fff; border-top: 1px solid #7f97b8; border-bottom: 1px solid #7f97b8; font-size: 12.700px; }
.tot { height: 22px; line-height: 20px; background: #f0f0f0; border: 1px solid #5f82b4; padding: 0 3px; text-align: right; flex: none; color: #222; }
.tot-count { width: 43px; margin-left: 3px; background: #f6f6f6; }
.tot-label { width: 262px; margin-left: 58px; text-align: left; }
.tot-a { width: 63px; margin-left: 209px; }
.tot-b { width: 61px; margin-left: 44px; }
.tot-c { width: 66px; margin-left: 54px; }
.tot-d { width: 82px; margin-left: 323px; }

.gridnav-low { height: 24px; padding-top: 2px; border-bottom: 1px solid #a8a8a8; }
.gridnav-low .hscroll { height: 21px; padding-left: 70px; }
.gridnav-low .hthumb { width: 589px; }

.actions { height: 38px; flex: none; display: flex; align-items: flex-start; padding: 3px 0 0 3px; background: linear-gradient(#fff, #e8e8e8); border-bottom: 1px solid #bbb; }
.btn { height: 29px; margin: 1px 6px 0 0; padding: 0; background: #e4e4e4; border: 1px solid #c0c0c0; outline: 1px solid #dadada; outline-offset: 1px; font-family: inherit; font-size: 15.500px; color: #222; flex: none; }
.btn-nova { width: 88px; margin-right: 5px; }
.btn-obrisi { width: 77px; margin-right: 5px; }
.btn-knj { width: 101px; }
.btn-stampaj { width: 83px; margin-right: 1px; }
.btn-drop { width: 15px; }
.caret-black { display: block; margin: 0 auto; width: 0; height: 0; border-left: 5px solid transparent; border-right: 5px solid transparent; border-top: 5px solid #111; }
.btn-stavku { width: 101px; }
.btn-skener { width: 118px; }
.btn-lb { width: 46px; }

/* planner */
.planner { width: 252px; flex: none; display: flex; flex-direction: column; border-left: 1px solid #4b5f82; }
.plan-tabs { height: 31px; padding-left: 0; }
.plan-tabs .tab { height: 30px; font-size: 16px; line-height: 30px; margin-right: 2px; }
.plan-tabs .tab:nth-child(1) { width: 54px; line-height: 27px; background: #f0f0f0; }
.plan-tabs .tab:nth-child(2) { width: 40px; margin-right: 1px; }
.plan-tabs .tab:nth-child(3) { width: 85px; margin-right: 1px; }
.plan-tabs .tab:nth-child(4) { width: 66px; }
.sched { flex: 1; min-height: 0; display: flex; border-top: 1px solid #ccc; background: #fff; }
.sched-main { flex: 1; min-width: 0; display: flex; flex-direction: column; }
.sched-head { display: flex; height: 37px; flex: none; background: #f0f0f0; border-bottom: 1px solid #9ab; }
.sched-corner { width: 45px; border-right: 1px solid #c0c0c0; }
.sched-day { flex: 1; text-align: center; color: #fbfbfb; font-size: 13.300px; line-height: 38px; }
.sched-body { flex: 1; min-height: 0; overflow: hidden; position: relative; }
.hour { display: flex; height: 50px; }
.h-time { width: 45px; flex: none; background-color: #f0f0f0; border-right: 1px solid #c0c0c0; display: grid; grid-template-columns: 31px 1fr; grid-template-rows: 25px 25px; color: #222; background-image: linear-gradient(#a0a0a0, #a0a0a0), linear-gradient(#a0a0a0, #a0a0a0); background-repeat: no-repeat; background-size: 12px 1px, 30px 1px; background-position: 26px 24px, 7px 49px; }
.h-shadow { background-image: linear-gradient(#a0a0a0, #a0a0a0), linear-gradient(#f0f0f0, #d0d0d0); background-size: 12px 1px, 45px 8px; background-position: 26px 24px, 0 42px; }
.h-num { font-size: 19.500px; line-height: 25px; text-align: right; padding-top: 1px; }
.h-min { font-size: 8.500px; line-height: 22px; padding: 1px 0 0 2px; color: #444; }
.h-day { flex: 1; display: flex; flex-direction: column; margin-left: 7px; border-left: 1px solid #000; }
.h-day i { display: block; height: 25px; border-bottom: 1px solid #a0a0a0; }
.event { position: absolute; left: 45px; top: 300px; width: 180px; height: 25px; display: flex; background: #fff; border: 1px solid #4a70a8; border-left: 0; box-shadow: 2px 2px 3px rgba(0,0,0,.35); font-size: 12.300px; line-height: 24px; white-space: nowrap; }
.event-bar { width: 8px; background: #0000e6; flex: none; }
.event-text { padding-left: 4px; }
.badge { position: absolute; left: 202px; top: 817px; width: 24px; height: 24px; border-radius: 50%; background: #8b0a14; }
.sched-scroll { width: 19px; flex: none; background: #f0f0f0; display: flex; flex-direction: column; align-items: center; padding-top: 3px; border-right: 1px solid #fff; }
.sched-thumb { width: 18px; height: 566px; margin-top: 137px; background: #c8c8c8; }

/* red annotation */
.callout { position: absolute; left: 238px; top: 59px; width: 112px; height: 63px; border: 6px solid #e3202e; pointer-events: none; }
```
